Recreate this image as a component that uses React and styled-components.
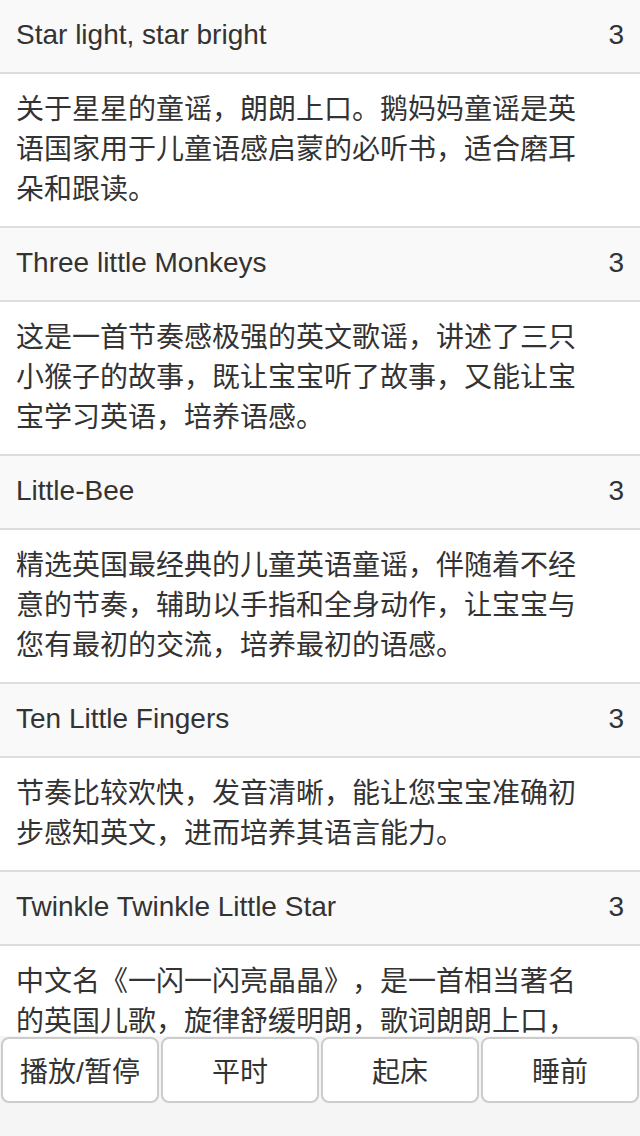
import React from 'react'
import styled, { createGlobalStyle } from 'styled-components'

const GlobalStyle = createGlobalStyle`
  html, body {
    margin: 0;
    padding: 0;
    background: #ffffff;
  }

  body {
    font-family: 'Liberation Sans', 'Noto Sans CJK SC', sans-serif;
    color: #333333;
  }
`

const List = styled.div`
  display: flex;
  flex-direction: column;
  padding-bottom: 100px;
`

const Header = styled.div`
  display: flex;
  align-items: center;
  justify-content: space-between;
  height: 74px;
  box-sizing: border-box;
  padding: 0 16px 2px;
  background: #f9f9f9;
  border-bottom: 2px solid #dddddd;
  font-size: 28px;
`

const Count = styled.span`
  font-size: 28px;
`

const Desc = styled.div`
  padding: 16px 54px 16px 16px;
  background: #ffffff;
  border-bottom: 2px solid #dddddd;
  font-size: 28px;
  line-height: 40px;
  text-spacing-trim: space-all;
`

const Footer = styled.div`
  position: fixed;
  left: 0;
  right: 0;
  bottom: 0;
  height: 100px;
  box-sizing: border-box;
  display: grid;
  grid-template-columns: repeat(4, 1fr);
  align-items: start;
  padding: 1px 0 0;
  background: #f5f5f5;
`

const Button = styled.button`
  margin: 0 1px;
  height: 66px;
  background: #ffffff;
  border: 2px solid #cccccc;
  border-radius: 8px;
  font-family: 'Liberation Sans', 'Noto Sans CJK SC', sans-serif;
  font-size: 28px;
  color: #333333;
  padding: 0;
`

const songs = [
  {
    title: 'Star light, star bright',
    count: 3,
    desc: '关于星星的童谣，朗朗上口。鹅妈妈童谣是英语国家用于儿童语感启蒙的必听书，适合磨耳朵和跟读。'
  },
  {
    title: 'Three little Monkeys',
    count: 3,
    desc: '这是一首节奏感极强的英文歌谣，讲述了三只小猴子的故事，既让宝宝听了故事，又能让宝宝学习英语，培养语感。'
  },
  {
    title: 'Little-Bee',
    count: 3,
    desc: '精选英国最经典的儿童英语童谣，伴随着不经意的节奏，辅助以手指和全身动作，让宝宝与您有最初的交流，培养最初的语感。'
  },
  {
    title: 'Ten Little Fingers',
    count: 3,
    desc: '节奏比较欢快，发音清晰，能让您宝宝准确初步感知英文，进而培养其语言能力。'
  },
  {
    title: 'Twinkle Twinkle Little Star',
    count: 3,
    desc: '中文名《一闪一闪亮晶晶》，是一首相当著名的英国儿歌，旋律舒缓明朗，歌词朗朗上口，非常适合宝宝跟唱学习。'
  }
]

const buttons = ['播放/暂停', '平时', '起床', '睡前']

const App = () => (
  <>
    <GlobalStyle />
    <List>
      {songs.map(song => (
        <React.Fragment key={song.title}>
          <Header>
            <span>{song.title}</span>
            <Count>{song.count}</Count>
          </Header>
          <Desc>{song.desc}</Desc>
        </React.Fragment>
      ))}
    </List>
    <Footer>
      {buttons.map(label => (
        <Button key={label}>{label}</Button>
      ))}
    </Footer>
  </>
)

export default App
